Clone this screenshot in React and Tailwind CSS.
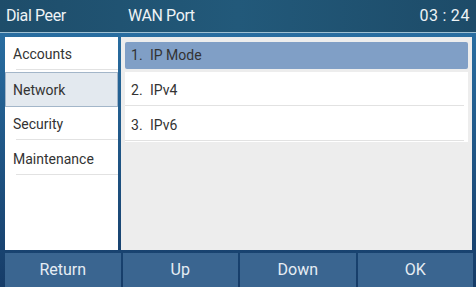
import { useState } from 'react';

// Phone settings screen: Network > WAN Port.

const MENU = ['Accounts', 'Network', 'Security', 'Maintenance'];
const ITEMS = ['IP Mode', 'IPv4', 'IPv6'];
const KEYS = ['Return', 'Up', 'Down', 'OK'];

export default function App() {
  const [menu] = useState(1);
  const [item] = useState(0);

  return (
    <div
      className="flex h-[287px] w-[476px] flex-col overflow-hidden bg-gradient-to-b from-[#2b74a8] to-[#163c68] text-[14px] text-[#333]"
      style={{ fontFamily: 'Roboto, "Liberation Sans", sans-serif' }}
    >
      <header className="flex h-[32px] shrink-0 items-center bg-gradient-to-r from-[#1e4d6a] via-[#22597a] to-[#1d4b68] text-[16px] tracking-[-0.4px] text-[#eef3f6]">
        <span className="w-[122px] pl-[6px]">Dial Peer</span>
        <span className="flex-1 pl-[6px]">WAN Port</span>
        <span className="pr-[6px] tracking-[0.6px]">03&thinsp;:&thinsp;24</span>
      </header>
      <div className="h-px shrink-0 bg-[#9ec0d2]" />

      <main className="mt-[4px] flex h-[213px] shrink-0 gap-[3px] pl-[5px] pr-[4px]">
        <nav className="flex w-[113px] flex-col bg-white">
          {MENU.map((label, i) =>
            i === menu ? (
              <div
                key={label}
                className="flex h-[35px] items-center border border-[#a3b6c9] bg-[#e3e9ef] pl-[7px] pt-[1px]"
              >
                {label}
              </div>
            ) : (
              <div key={label} className="flex h-[35px] flex-col">
                <span className="flex flex-1 items-center pl-[8px] pt-[3px]">{label}</span>
                <div className="mb-[2px] ml-[11px] h-px bg-[#e2e2e2]" />
              </div>
            ),
          )}
        </nav>

        <section className="flex flex-1 flex-col bg-[#ededed] px-[4px]">
          {ITEMS.map((label, i) =>
            i === item ? (
              <div key={label} className="flex h-[35px] flex-col pt-[5px] pb-[3px]">
                <div className="flex flex-1 items-center rounded-[2px] bg-[#809fc6] pl-[6px]">
                  <span className="w-[19px]">{i + 1}.</span>
                  {label}
                </div>
              </div>
            ) : (
              <div key={label} className="flex h-[35px] flex-col bg-white">
                <div className="flex flex-1 items-center pl-[6px] pt-[3px]">
                  <span className="w-[19px]">{i + 1}.</span>
                  {label}
                </div>
                <div className="mb-[1px] mr-[4px] h-px bg-[#e2e2e2]" />
              </div>
            ),
          )}
        </section>
      </main>

      <footer className="mt-[3px] flex flex-1 gap-[2px] pl-[5px] pr-[3px]">
        {KEYS.map((k) => (
          <button
            key={k}
            className="flex flex-1 items-center justify-center bg-[#3a6590] text-[16px] text-[#e6edf4]"
          >
            {k}
          </button>
        ))}
      </footer>
    </div>
  );
}
